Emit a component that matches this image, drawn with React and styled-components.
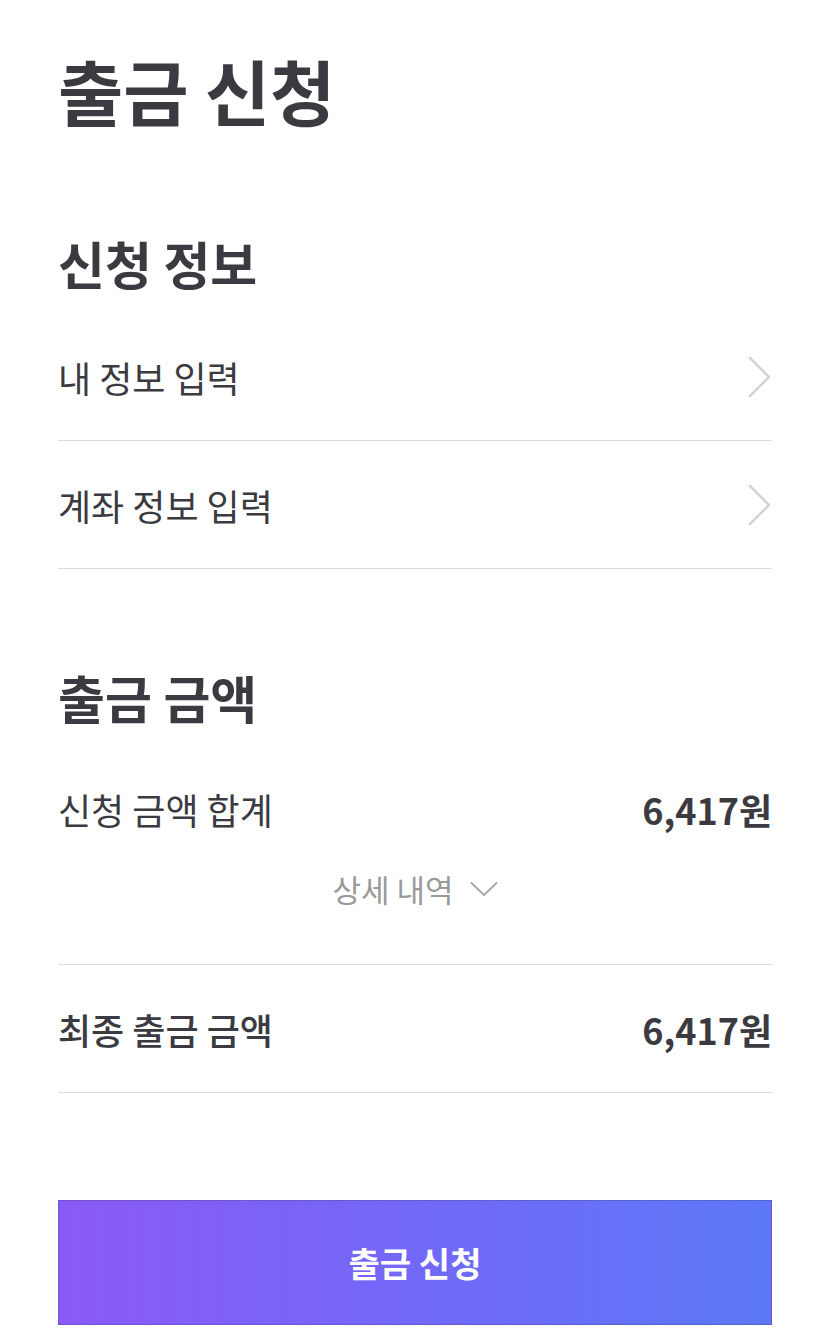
import styled, { createGlobalStyle } from "styled-components";

const GlobalStyle = createGlobalStyle`
    html, body {
        margin: 0;
        padding: 0;
        background: #fff;
    }
    body {
        font-family: "Noto Sans CJK KR", "Noto Sans", sans-serif;
        color: #3a3a40;
    }
`

const Page = styled.div`
    width: 830px;
    box-sizing: border-box;
    padding: 49px 58px 0;
`

const Title = styled.h1`
    margin: 0;
    font-size: 71px;
    line-height: 80px;
    font-weight: 700;
    color: #3a3a40;
`

const SectionTitle = styled.h2`
    margin: ${(p) => p.$top}px 0 20px;
    font-size: 51px;
    line-height: 60px;
    font-weight: 700;
    color: #3a3a40;
`

const LinkRow = styled.div`
    display: flex;
    align-items: center;
    justify-content: space-between;
    height: 127px;
    border-bottom: 1px solid #dcdcdc;
`

const RowLabel = styled.span`
    font-size: 36px;
    line-height: 50px;
    font-weight: ${(p) => (p.$strong ? 500 : 400)};
    color: #3a3a40;
`

const Amount = styled.span`
    font-size: 36px;
    line-height: 50px;
    font-weight: 700;
    color: #3a3a40;
`

const SumRow = styled.div`
    display: flex;
    align-items: center;
    justify-content: space-between;
    margin-top: 57px;
`

const DetailToggle = styled.div`
    display: flex;
    align-items: center;
    justify-content: center;
    gap: 16px;
    padding: 35px 0 55px;
    border-bottom: 1px solid #dcdcdc;
    font-size: 31px;
    line-height: 40px;
    color: #9a9a9a;
`

const SubmitButton = styled.button`
    display: block;
    width: 100%;
    height: 125px;
    margin-top: 107px;
    border: 1px solid rgba(70, 70, 140, 0.35);
    background: linear-gradient(90deg, #8b5af6 0%, #7765f7 40%, #5b78f6 100%);
    color: #fff;
    font-family: "Noto Sans CJK KR", sans-serif;
    font-size: 34px;
    font-weight: 700;
    cursor: pointer;
`

function ChevronRight() {
    return (
        <svg width="26" height="42" viewBox="0 0 26 42" fill="none">
            <path d="M4 2 L23 21 L4 40" stroke="#d4d4d4" strokeWidth="2.5" strokeLinecap="round" strokeLinejoin="round" />
        </svg>
    )
}

function ChevronDown() {
    return (
        <svg width="28" height="16" viewBox="0 0 28 16" fill="none">
            <path d="M1.5 2 L14 14 L26.5 2" stroke="#a8a8a8" strokeWidth="1.8" strokeLinecap="round" strokeLinejoin="round" />
        </svg>
    )
}

export default function App() {
    return (
        <>
            <GlobalStyle />
            <Page>
                <Title>출금 신청</Title>

                <SectionTitle $top={104}>신청 정보</SectionTitle>
                <LinkRow>
                    <RowLabel>내 정보 입력</RowLabel>
                    <ChevronRight />
                </LinkRow>
                <LinkRow>
                    <RowLabel>계좌 정보 입력</RowLabel>
                    <ChevronRight />
                </LinkRow>

                <SectionTitle $top={98}>출금 금액</SectionTitle>
                <SumRow>
                    <RowLabel>신청 금액 합계</RowLabel>
                    <Amount>6,417원</Amount>
                </SumRow>
                <DetailToggle>
                    상세 내역
                    <ChevronDown />
                </DetailToggle>
                <LinkRow>
                    <RowLabel $strong>최종 출금 금액</RowLabel>
                    <Amount>6,417원</Amount>
                </LinkRow>

                <SubmitButton>출금 신청</SubmitButton>
            </Page>
        </>
    )
}
